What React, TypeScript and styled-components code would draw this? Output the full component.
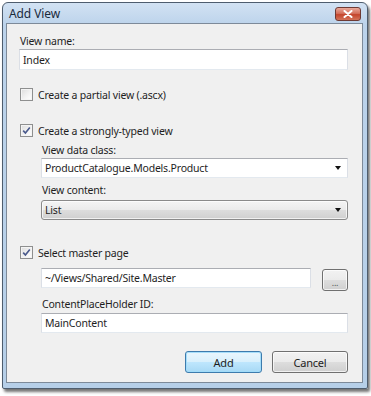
import React from "react";
import styled, { createGlobalStyle } from "styled-components";

const Global = createGlobalStyle`
  html, body { margin: 0; padding: 0; background: #ffffff; }
  body { font-family: "Noto Sans", "Open Sans", sans-serif; font-size: 10.5px; letter-spacing: -0.2px; color: #1e1e1e; }
  * { box-sizing: border-box; }
`;

const Page = styled.div`
  padding: 2px 0 0 2px;
  width: 371px;
  height: 396px;
`;

const Window = styled.div`
  width: 366px;
  height: 387px;
  border: 1px solid #4e5d6e;
  border-radius: 6px 6px 2px 2px;
  background: linear-gradient(180deg, #d2e2f3 0px, #bcd3eb 22px, #b6cfe8 100%);
  box-shadow: 2px 3px 3px rgba(0, 0, 0, 0.55);
  display: flex;
  flex-direction: column;
  padding: 0 4px 5px 3px;
`;

const TitleBar = styled.div`
  height: 20px;
  display: flex;
  align-items: center;
  justify-content: space-between;
  padding: 0 2px 0 3px;
`;

const Title = styled.span`
  font-size: 12px;
  letter-spacing: -0.1px;
  color: #1a2a3c;
`;

const CloseButton = styled.div`
  width: 26px;
  height: 14px;
  margin-top: 2px;
  border: 1px solid #6e3a34;
  border-radius: 3px;
  background: linear-gradient(180deg, #e9a99a 0%, #d4705c 45%, #c4452c 55%, #d3735a 100%);
  display: flex;
  align-items: center;
  justify-content: center;
`;

const Content = styled.div`
  flex: 1;
  border: 1px solid #7d8a99;
  background: #f0f0f0;
  padding: 0 14px 0 12px;
  display: flex;
  flex-direction: column;
`;

const Label = styled.div<{ $mt: number; $ml?: number }>`
  margin-top: ${(p) => p.$mt}px;
  margin-left: ${(p) => p.$ml ?? 1}px;
  height: 15px;
  line-height: 15px;
  white-space: nowrap;
`;

const TextBox = styled.div<{ $mt: number; $h?: number }>`
  margin-top: ${(p) => p.$mt}px;
  height: ${(p) => p.$h ?? 20}px;
  background: #ffffff;
  border: 1px solid #dbdfe6;
  border-top-color: #abadb3;
  border-bottom-color: #e3e9ef;
  padding-left: 3px;
  display: flex;
  align-items: center;
  flex: 0 0 auto;
  white-space: nowrap;
`;

const Indent = styled.div`
  margin-left: 22px;
  display: flex;
  flex-direction: column;
`;

const CheckRow = styled.label<{ $mt: number }>`
  margin-top: ${(p) => p.$mt}px;
  height: 15px;
  display: flex;
  align-items: center;
  gap: 5px;
  padding-left: 1px;
  white-space: nowrap;
`;

const CheckBox = styled.span`
  width: 13px;
  height: 13px;
  border: 1px solid #8e8f8f;
  background: linear-gradient(135deg, #dcdcdc 0%, #f4f4f4 60%, #ffffff 100%);
  box-shadow: inset 0 0 0 1px #f4f4f4;
  display: flex;
  align-items: center;
  justify-content: center;
  flex: 0 0 auto;
`;

const Combo = styled.div<{ $mt: number }>`
  margin-top: ${(p) => p.$mt}px;
  height: 20px;
  background: #ffffff;
  border: 1px solid #dbdfe6;
  border-top-color: #abadb3;
  border-bottom-color: #e3e9ef;
  padding: 0 6px 0 3px;
  display: flex;
  align-items: center;
  justify-content: space-between;
  white-space: nowrap;
`;

const DropButton = styled.div<{ $mt: number }>`
  margin-top: ${(p) => p.$mt}px;
  height: 20px;
  border: 1px solid #8a8a8a;
  border-radius: 3px;
  background: linear-gradient(180deg, #f4f4f4 0%, #ebebeb 48%, #dddddd 52%, #cfcfcf 100%);
  box-shadow: inset 0 0 0 1px rgba(255, 255, 255, 0.7);
  padding: 0 6px 0 3px;
  display: flex;
  align-items: center;
  justify-content: space-between;
`;

const Arrow = styled.span`
  width: 0;
  height: 0;
  border-left: 3px solid transparent;
  border-right: 3px solid transparent;
  border-top: 4px solid #111111;
`;

const MasterRow = styled.div`
  margin-top: 8px;
  height: 22px;
  display: flex;
  align-items: flex-start;
  gap: 11px;
`;

const PathBox = styled(TextBox)`
  width: 270px;
`;

const PushButton = styled.div<{ $w: number; $default?: boolean }>`
  width: ${(p) => p.$w}px;
  height: 22px;
  border: 1px solid ${(p) => (p.$default ? "#3d7bad" : "#707070")};
  border-radius: 3px;
  background: ${(p) =>
    p.$default
      ? "linear-gradient(180deg, #eaf6fd 0%, #d9f0fc 48%, #bee6fd 52%, #a7d9f5 100%)"
      : "linear-gradient(180deg, #f2f2f2 0%, #ebebeb 48%, #dddddd 52%, #cfcfcf 100%)"};
  box-shadow: inset 0 0 0 1px ${(p) => (p.$default ? "rgba(160,220,250,0.9)" : "rgba(255,255,255,0.7)")};
  display: flex;
  align-items: center;
  justify-content: center;
  font-size: 11px;
  color: #1e1e1e;
`;

const SmallButton = styled(PushButton)`
  margin-top: 1px;
  font-size: 9px;
  align-items: flex-end;
  padding-bottom: 3px;
  line-height: 8px;
  color: #555;
`;

const ButtonRow = styled.div`
  margin-top: 18px;
  display: flex;
  justify-content: flex-end;
  gap: 10px;
`;

const Check = () => (
  <svg width="9" height="9" viewBox="0 0 9 9">
    <path d="M1.2 4.6 L3.4 7 L7.8 1.4" fill="none" stroke="#4a5a8c" strokeWidth="1.6" />
  </svg>
);

const CloseX = () => (
  <svg width="10" height="8" viewBox="0 0 10 8">
    <path d="M1.5 1 L8.5 7 M8.5 1 L1.5 7" stroke="#ffffff" strokeWidth="2" strokeLinecap="round" />
  </svg>
);

export default function App() {
  return (
    <Page>
      <Global />
      <Window>
        <TitleBar>
          <Title>Add View</Title>
          <CloseButton>
            <CloseX />
          </CloseButton>
        </TitleBar>
        <Content>
          <Label $mt={10}>View name:</Label>
          <TextBox $mt={0} $h={21}>Index</TextBox>
          <CheckRow $mt={17}>
            <CheckBox />
            Create a partial view (.ascx)
          </CheckRow>
          <CheckRow $mt={21}>
            <CheckBox>
              <Check />
            </CheckBox>
            Create a strongly-typed view
          </CheckRow>
          <Indent>
            <Label $mt={5}>View data class:</Label>
            <Combo $mt={0}>
              ProductCatalogue.Models.Product
              <Arrow />
            </Combo>
            <Label $mt={5}>View content:</Label>
            <DropButton $mt={2}>
              List
              <Arrow />
            </DropButton>
          </Indent>
          <CheckRow $mt={25}>
            <CheckBox>
              <Check />
            </CheckBox>
            Select master page
          </CheckRow>
          <Indent>
            <MasterRow>
              <PathBox $mt={0}>~/Views/Shared/Site.Master</PathBox>
              <SmallButton $w={26}>...</SmallButton>
            </MasterRow>
            <Label $mt={7}>ContentPlaceHolder ID:</Label>
            <TextBox $mt={1}>MainContent</TextBox>
          </Indent>
          <ButtonRow>
            <PushButton $w={77} $default>
              Add
            </PushButton>
            <PushButton $w={76}>Cancel</PushButton>
          </ButtonRow>
        </Content>
      </Window>
    </Page>
  );
}
